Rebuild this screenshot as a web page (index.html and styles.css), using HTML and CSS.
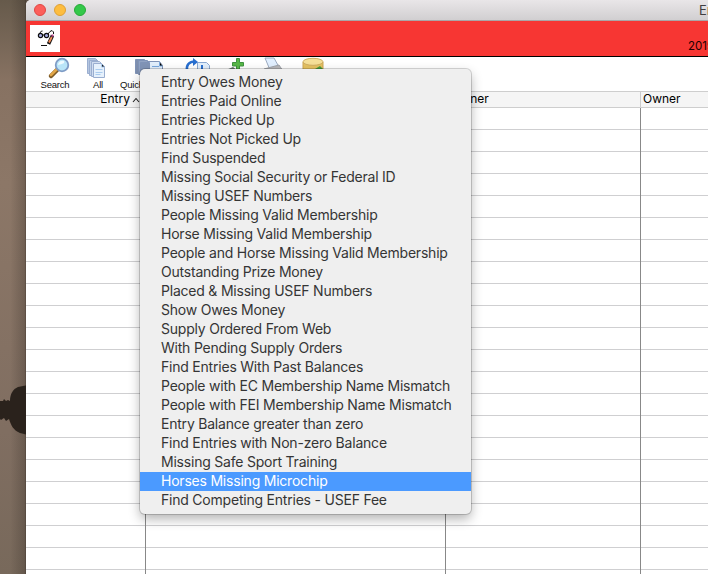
FILE: index.html
```html
<!DOCTYPE html>
<html lang="en">
<head>
<meta charset="utf-8">
<title>Entries</title>
<link rel="stylesheet" href="styles.css">
</head>
<body>
<div class="desktop">
  <div class="wallpaper">
    <svg width="26" height="574" viewBox="0 0 26 574"><defs><filter id="soft" x="-30%" y="-30%" width="160%" height="160%"><feGaussianBlur stdDeviation=".7"/></filter></defs><path filter="url(#soft)" fill="#2b231c" d="M-2 401L3 401 4 399 6 401 8 400 10 401C10 394 13 389 18 387L28 385V435L20 433C13 430 11 425 9 419L6 421 4 418 1 420-2 417Z"/></svg>
  </div>
  <main class="window">
    <header class="titlebar">
      <div class="lights"><i class="light close"></i><i class="light minimise"></i><i class="light expand"></i></div>
      <span class="title">Entries</span>
    </header>
    <section class="banner">
      <div class="logo">
        <svg width="30" height="27" viewBox="0 0 30 27" fill="none" stroke="#111" stroke-width="1"><circle cx="10.500" cy="10.500" r="2.100" fill="#a9b0e6" stroke-width="1.200"/><circle cx="16.500" cy="10.500" r="2.100" fill="#a9b0e6" stroke-width="1.200"/><path d="M9.500 8.500l2-2.500h1M12.500 10h2M18 9l2-2.500 2-1 1.500 1.500v2"/><path d="M22.500 10.500L18.500 19" stroke-width="3.600"/><path d="M21.800 12l-2.800 5.500" stroke="#f08b58" stroke-width="1.900"/><path d="M22.500 9.500v2.200" stroke="#b8438c" stroke-width="2"/><path d="M11 20.500h6" /></svg>
      </div>
      <span class="year">2019</span>
    </section>
    <nav class="toolbar">
      <div class="tool search"><svg width="24" height="24" viewBox="0 0 24 24"><path d="M10 13L4 19" stroke="#7c5a26" stroke-width="4.500" stroke-linecap="round"/><path d="M9.500 12.500L4 18" stroke="#e2a647" stroke-width="2.800" stroke-linecap="round"/><circle cx="15" cy="8" r="6.300" fill="#b9e5f8" stroke="#7f9cc6" stroke-width="1.800"/><path d="M11 8c0-3 3-5 6-4 1 2-1 3-6 4z" fill="#eefaff"/></svg><span>Search</span></div>
      <div class="tool all"><svg width="24" height="24" viewBox="0 0 24 24" stroke="#9aaed0" stroke-width="1"><path fill="#b4c5df" d="M1.500 1.500h8l2 2v13h-10z"/><path fill="#c2d1e7" d="M3.500 3.500h8l2 2v13h-10z"/><path fill="#d0ddf0" d="M5.500 4.500h8l2 2v13h-10z"/><path fill="#e6f1fc" d="M7.500 6.500h8l3 3v11h-11z"/><path stroke="#a9cbee" d="M9.500 12.500h7M9.500 15.500h7M9.500 17.500h5M15.500 7v3h3"/></svg><span>All</span></div>
      <div class="tool quick"><svg width="30" height="24" viewBox="0 0 30 24" stroke="#7f93b7"><path fill="#e2effc" d="M13.500 4.500h12l3 4v12h-15z"/><path fill="#7e8fae" d="M1.500 2.500h9v14h-9z"/><path fill="#91a3c2" d="M4.500 3.500h9v14h-9z"/><path fill="#8194b6" d="M6.500 5.500h9v14h-9z"/><path stroke="#79a8de" d="M18 9.500h7M18 12.500h7M25.500 5v4h3"/></svg><span>Quick Find</span></div>
      <div class="tool refresh"><svg width="28" height="24" viewBox="0 0 28 24"><path fill="#e2effc" stroke="#8aa9d3" d="M13.500 5.500h9l3 3v12h-12z"/><path d="M3 14C2 8 5 4.500 11 4.500" fill="none" stroke="#286fd0" stroke-width="2.500"/><path d="M9 1l5 4-5 4z" fill="#286fd0"/><path d="M18 8v8" stroke="#286fd0" stroke-width="2"/></svg></div>
      <div class="tool add"><svg width="24" height="24" viewBox="0 0 24 24"><path d="M1 13l7-3 8 6-9 4z" fill="#65726c"/><path d="M11.500 1.500h3v4h4v3.500h-4v5h-3V9h-4V5.500h4z" fill="#58b847" stroke="#3f9340"/></svg></div>
      <div class="tool print"><svg width="24" height="24" viewBox="0 0 24 24"><path d="M2 1l9 0 5 9-9 3z" fill="#e1efff" stroke="#9baac0"/><path d="M1 12l15-4 4 6-18 4z" fill="#b7b7ba" stroke="#a0a4ab"/></svg></div>
      <div class="tool data"><svg width="24" height="24" viewBox="0 0 24 24"><path d="M1 5v15h20V5" fill="#e6c260" stroke="#cda754"/><ellipse cx="11" cy="4.800" rx="10" ry="3.500" fill="#f5df98" stroke="#d0ae61"/><path d="M13 12l5-3 3 3z" fill="#4b9b3d"/></svg></div>
    </nav>
    <section class="table">
      <div class="table-head"><div class="entry">Entry<svg width="8" height="6" viewBox="0 0 8 6"><path d="M1 5l3-3.500L7 5" fill="none" stroke="#222" stroke-width="1.100"/></svg></div><div></div><div class="trainer">Trainer</div><div class="owner">Owner</div></div>
      <div class="table-body"><div></div><div></div><div></div><div></div></div>
    </section>
  </main>
  <ul class="menu">
    <li>Entry Owes Money</li>
    <li>Entries Paid Online</li>
    <li>Entries Picked Up</li>
    <li>Entries Not Picked Up</li>
    <li>Find Suspended</li>
    <li>Missing Social Security or Federal ID</li>
    <li>Missing USEF Numbers</li>
    <li>People Missing Valid Membership</li>
    <li>Horse Missing Valid Membership</li>
    <li>People and Horse Missing Valid Membership</li>
    <li>Outstanding Prize Money</li>
    <li>Placed &amp; Missing USEF Numbers</li>
    <li>Show Owes Money</li>
    <li>Supply Ordered From Web</li>
    <li>With Pending Supply Orders</li>
    <li>Find Entries With Past Balances</li>
    <li>People with EC Membership Name Mismatch</li>
    <li>People with FEI Membership Name Mismatch</li>
    <li>Entry Balance greater than zero</li>
    <li>Find Entries with Non-zero Balance</li>
    <li>Missing Safe Sport Training</li>
    <li class="selected">Horses Missing Microchip</li>
    <li>Find Competing Entries - USEF Fee</li>
  </ul>
</div>
</body>
</html>
```
FILE: styles.css
```css
* { box-sizing: border-box; }
body { margin: 0; overflow: hidden; font-family: Inter, "Liberation Sans", sans-serif; }
.desktop { position: relative; display: flex; width: 708px; height: 574px; overflow: hidden; background: #5d5148; }
.wallpaper { width: 26px; flex: none; background: linear-gradient(90deg, transparent 40%, rgba(50,42,36,.28) 94%, rgba(40,32,26,.5)), linear-gradient(#665a4b, #877262 14%, #8c7767 32%, #806e61 75%, #78695b); }
.wallpaper svg { display: block; }
.window { flex: 1; min-width: 0; background: #fff; border-top-left-radius: 5px; overflow: hidden; }
.titlebar { display: flex; justify-content: space-between; height: 21px; background: linear-gradient(#e9e6e8, #d1cfd1); border-bottom: 1px solid #aaa5a7; white-space: nowrap; }
.lights { display: flex; gap: 8px; padding: 4px 0 0 8px; }
.light { width: 12px; height: 12px; border-radius: 50%; border: 1px solid; }
.close { background: #fc5f5b; border-color: #df4643; }
.minimise { background: #fdbd40; border-color: #dea036; }
.expand { background: #34c84a; border-color: #27a938; }
.title { width: 9px; font-size: 13px; line-height: 21px; color: #403e40; }
.banner { display: flex; justify-content: space-between; height: 36px; padding: 4px 0 0 4px; background: #f73633; border-bottom: 1px solid #000; }
.logo { width: 30px; height: 27px; background: #fff; }
.logo svg { display: block; }
.year { width: 20px; padding-top: 13px; font-size: 11.5px; line-height: 16px; color: #200; }
.toolbar { display: flex; height: 34px; overflow: hidden; font: 9.5px/11px "Liberation Sans", sans-serif; letter-spacing: -.2px; color: #111; }
.tool { flex: none; display: flex; flex-direction: column; align-items: center; white-space: nowrap; }
.tool svg { display: block; flex: none; }
.tool span { margin-top: -2px; }
.search { width: 58px; }
.search svg { margin-left: 8px; }
.all { width: 28px; }
.quick { width: 66px; align-items: flex-start; padding-left: 8px; }
.quick svg { margin-left: 14px; }
.refresh, .add, .print, .data { align-items: flex-start; }
.refresh { width: 26px; padding-left: 7px; margin: 0 16px 0 -1px; }
.add { width: 38px; padding-left: 6px; }
.print { width: 39px; padding-left: 6px; }
.data { width: 30px; padding-left: 6px; }
.table-head, .table-body { display: grid; grid-template-columns: 120px 300px 195px 1fr; }
.table-head { height: 17px; background: #f5f5f5; border-top: 1px solid #cecece; border-bottom: 1px solid #cecece; font-size: 12px; line-height: 13px; color: #000; }
.entry { display: flex; align-items: flex-start; justify-content: flex-end; gap: 2px; padding-right: 6px; }
.entry svg { margin-top: 5px; }
.trainer { padding-left: 3px; }
.owner { padding-left: 2px; }
.table-head .trainer { border-right: 1px solid #ccc; }
.table-body { height: 466px; background: repeating-linear-gradient(#fff 0 21px, #cfcfd1 21px 22px); }
.table-body div { border-right: 1px solid #888; }
.table-body div:last-child { border: 0; }
.menu { position: absolute; left: 140px; top: 69px; width: 331px; height: 445px; margin: 0; padding: 4px 0; list-style: none; background: #efefef; border-radius: 5px; box-shadow: 0 0 0 1px rgba(0,0,0,.16), 0 5px 12px rgba(0,0,0,.3); font-size: 14px; line-height: 17px; letter-spacing: -.215px; color: #353535; white-space: nowrap; }
.menu li { height: 19px; padding-left: 21px; }
.menu .selected { background: #4b9aff; color: #fff; }
```
